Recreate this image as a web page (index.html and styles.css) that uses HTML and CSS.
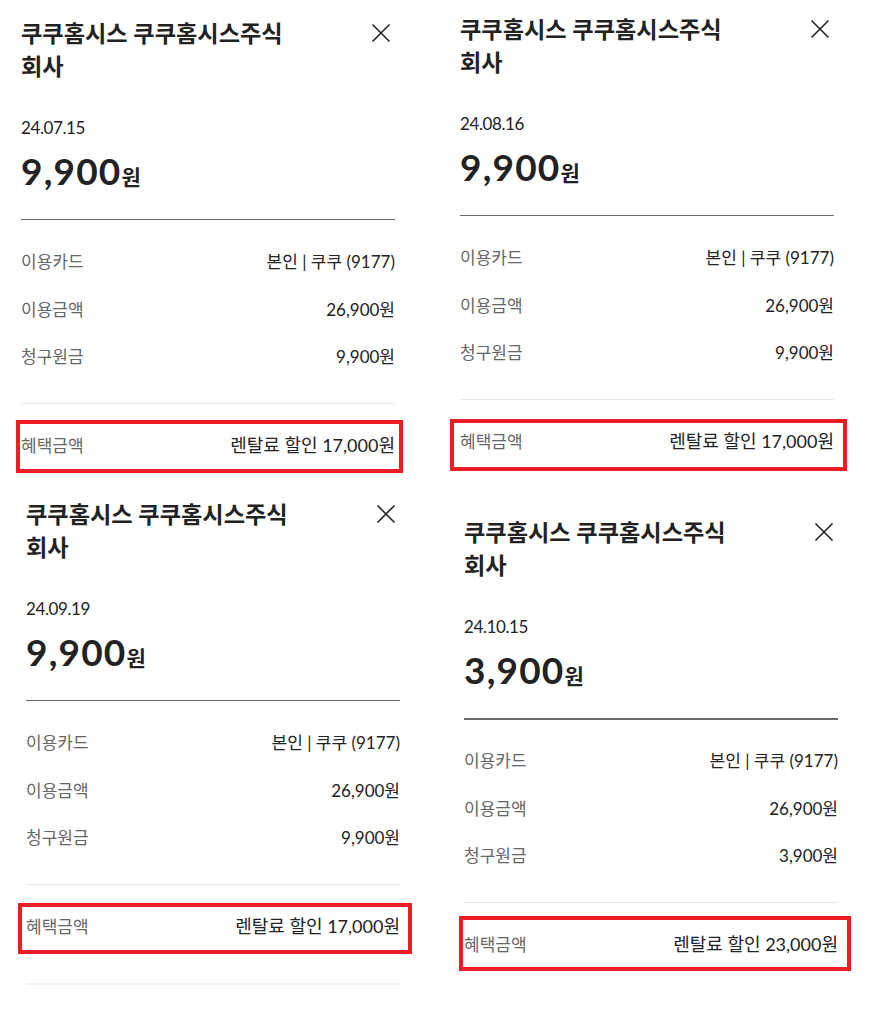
FILE: index.html
```html
<!DOCTYPE html>
<html lang="ko">
<head>
<meta charset="utf-8">
<title>이용내역 상세</title>
<link rel="stylesheet" href="styles.css">
</head>
<body>
<main class="collage">
  <div class="col">
    <section class="panel p1">
      <div class="sheet">
        <div class="head">
          <h2 class="title">쿠쿠홈시스 쿠쿠홈시스주식<br>회사</h2>
          <button class="close" aria-label="닫기"><svg viewBox="0 0 20 20" width="20" height="20"><path d="M1.5 1.5L18.5 18.5M18.5 1.5L1.5 18.5"/></svg></button>
        </div>
        <p class="date">24.07.15</p>
        <p class="amount">9,900<span class="won">원</span></p>
        <dl class="rows">
          <div class="row"><dt>이용카드</dt><dd>본인 | 쿠쿠 (9177)</dd></div>
          <div class="row"><dt>이용금액</dt><dd>26,900원</dd></div>
          <div class="row"><dt>청구원금</dt><dd>9,900원</dd></div>
        </dl>
        <div class="row benefit"><span class="lbl">혜택금액</span><span class="val">렌탈료 할인 17,000원</span><i class="mark"></i></div>
      </div>
    </section>
    <section class="panel p3">
      <div class="sheet">
        <div class="head">
          <h2 class="title">쿠쿠홈시스 쿠쿠홈시스주식<br>회사</h2>
          <button class="close" aria-label="닫기"><svg viewBox="0 0 20 20" width="20" height="20"><path d="M1.5 1.5L18.5 18.5M18.5 1.5L1.5 18.5"/></svg></button>
        </div>
        <p class="date">24.09.19</p>
        <p class="amount">9,900<span class="won">원</span></p>
        <dl class="rows">
          <div class="row"><dt>이용카드</dt><dd>본인 | 쿠쿠 (9177)</dd></div>
          <div class="row"><dt>이용금액</dt><dd>26,900원</dd></div>
          <div class="row"><dt>청구원금</dt><dd>9,900원</dd></div>
        </dl>
        <div class="row benefit"><span class="lbl">혜택금액</span><span class="val">렌탈료 할인 17,000원</span><i class="mark"></i></div>
        <hr class="next">
      </div>
    </section>
  </div>
  <div class="col">
    <section class="panel p2">
      <div class="sheet">
        <div class="head">
          <h2 class="title">쿠쿠홈시스 쿠쿠홈시스주식<br>회사</h2>
          <button class="close" aria-label="닫기"><svg viewBox="0 0 20 20" width="20" height="20"><path d="M1.5 1.5L18.5 18.5M18.5 1.5L1.5 18.5"/></svg></button>
        </div>
        <p class="date">24.08.16</p>
        <p class="amount">9,900<span class="won">원</span></p>
        <dl class="rows">
          <div class="row"><dt>이용카드</dt><dd>본인 | 쿠쿠 (9177)</dd></div>
          <div class="row"><dt>이용금액</dt><dd>26,900원</dd></div>
          <div class="row"><dt>청구원금</dt><dd>9,900원</dd></div>
        </dl>
        <div class="row benefit"><span class="lbl">혜택금액</span><span class="val">렌탈료 할인 17,000원</span><i class="mark"></i></div>
      </div>
    </section>
    <section class="panel p4">
      <div class="sheet">
        <div class="head">
          <h2 class="title">쿠쿠홈시스 쿠쿠홈시스주식<br>회사</h2>
          <button class="close" aria-label="닫기"><svg viewBox="0 0 20 20" width="20" height="20"><path d="M1.5 1.5L18.5 18.5M18.5 1.5L1.5 18.5"/></svg></button>
        </div>
        <p class="date">24.10.15</p>
        <p class="amount">3,900<span class="won">원</span></p>
        <dl class="rows">
          <div class="row"><dt>이용카드</dt><dd>본인 | 쿠쿠 (9177)</dd></div>
          <div class="row"><dt>이용금액</dt><dd>26,900원</dd></div>
          <div class="row"><dt>청구원금</dt><dd>3,900원</dd></div>
        </dl>
        <div class="row benefit"><span class="lbl">혜택금액</span><span class="val">렌탈료 할인 23,000원</span><i class="mark"></i></div>
      </div>
    </section>
  </div>
</main>
</body>
</html>
```
FILE: styles.css
```css
* { box-sizing: border-box; }
html, body { margin: 0; padding: 0; background: #fff; }
body {
  width: 874px;
  height: 1014px;
  overflow: hidden;
  font-family: Lato, "Noto Sans CJK KR", sans-serif;
  color: #222;
}
.collage {
  display: grid;
  grid-template-columns: 437px 437px;
}
.col { display: flex; flex-direction: column; }
.panel { overflow: hidden; }
.p1 { height: 480px; padding: 17px 0 0 21px; }
.p3 { height: 534px; padding: 18px 0 0 26px; }
.p2 { height: 490px; padding: 13px 0 0 23px; }
.p4 { height: 524px; padding: 26px 0 0 27px; }

.sheet { width: 374px; }

.head { display: flex; justify-content: space-between; align-items: flex-start; }
.title {
  margin: 0;
  font-size: 23.2px;
  line-height: 33px;
  font-weight: 700;
  color: #222;
}
.close {
  margin: 6px 4px 0 0;
  padding: 0;
  border: 0;
  background: none;
  width: 20px;
  height: 20px;
  display: block;
}
.close svg { display: block; stroke: #222; stroke-width: 1.6; fill: none; }

.date {
  margin: 35px 0 0;
  font-size: 17px;
  line-height: 20px;
  letter-spacing: -0.4px;
  color: #222;
}
.amount {
  margin: 11px 0 0;
  height: 44px;
  font-size: 37px;
  line-height: 44px;
  font-weight: 700;
  letter-spacing: 1.2px;
  color: #222;
}
.won { font-size: 21px; line-height: 1; font-weight: 700; letter-spacing: 0; }

.rows {
  margin: 26px 0 0;
  padding: 16.75px 0 23.75px;
  border-top: 1px solid #6b6b6b;
  border-bottom: 1px solid #e8e8e8;
}
.p4 .rows { border-top-width: 2px; padding-top: 15.75px; }
.row {
  display: flex;
  justify-content: space-between;
  align-items: center;
  height: 47.5px;
  font-size: 17px;
}
.row dt, .row .lbl { color: #666; }
.row dd { margin: 0; color: #222; }
.row .val { color: #222; font-size: 18px; }

.benefit { position: relative; margin-top: 16.25px; }
.mark {
  position: absolute;
  border: 4.5px solid #ee1c25;
  pointer-events: none;
}
.p1 .mark { left: -5px; right: -8px; top: 0; bottom: -5px; }
.p2 .mark { left: -10px; right: -13px; top: 3px; bottom: -7px; }
.p3 .mark { left: -8px; right: -12px; top: 2px; bottom: -5px; }
.p4 .mark { left: -5px; right: -13px; top: -3px; bottom: -4px; }

.next {
  margin: 34px 0 0;
  border: 0;
  border-top: 2px solid #f0f0f0;
  height: 0;
}
```
